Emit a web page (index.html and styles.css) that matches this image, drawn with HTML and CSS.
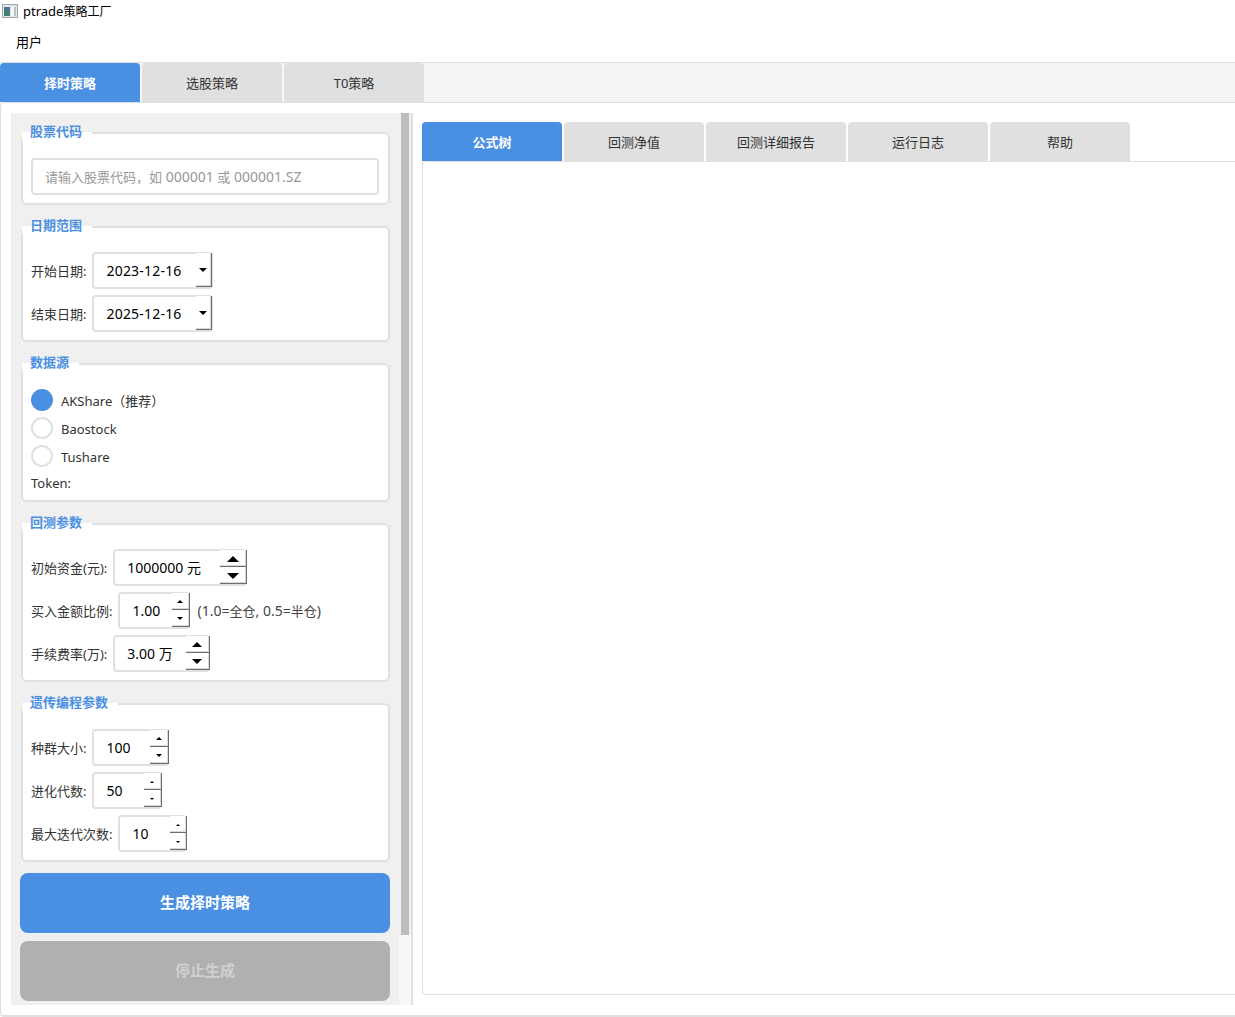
FILE: index.html
```html
<!DOCTYPE html>
<html lang="zh-CN">
<head>
<meta charset="utf-8">
<title>ptrade策略工厂</title>
<link rel="stylesheet" href="styles.css">
</head>
<body>
<div class="window">
  <header class="titlebar">
    <svg class="app-icon" width="16" height="14" viewBox="0 0 16 14">
      <rect x="0.5" y="0.5" width="15" height="13" fill="#e4e8ea" stroke="#a0a8ac"/>
      <rect x="2" y="3" width="6" height="9" fill="#3f7f78"/>
      <rect x="2" y="3" width="6" height="3" fill="#4c6f9c"/>
      <rect x="9" y="3" width="5" height="9" fill="#f4f6f6"/>
      <rect x="12" y="3" width="2" height="9" fill="#b9c2c6"/>
    </svg>
    <span class="app-title">ptrade<span class="cjk-sm">策略工厂</span></span>
  </header>
  <nav class="menubar"><span class="menu-item">用户</span></nav>
  <div class="tabbar main-tabs">
    <div class="tab active">择时策略</div>
    <div class="tab">选股策略</div>
    <div class="tab">T0策略</div>
  </div>
  <main class="main-pane">
    <aside class="scroll-area">
      <div class="form-panel">
        <section class="group">
          <h3 class="group-title">股票代码</h3>
          <div class="text-input"><span class="cjk">请输入股票代码，如</span> 000001 <span class="cjk">或</span> 000001.SZ</div>
        </section>
        <section class="group">
          <h3 class="group-title">日期范围</h3>
          <div class="row"><label class="lbl">开始日期:</label>
            <div class="field date"><span class="value">2023-12-16</span><span class="drop"><i class="tri down s-md"></i></span></div></div>
          <div class="row"><label class="lbl">结束日期:</label>
            <div class="field date"><span class="value">2025-12-16</span><span class="drop"><i class="tri down s-md"></i></span></div></div>
        </section>
        <section class="group">
          <h3 class="group-title">数据源</h3>
          <div class="radio-row"><span class="radio on"></span><span class="lbl">AKShare（推荐）</span></div>
          <div class="radio-row"><span class="radio"></span><span class="lbl">Baostock</span></div>
          <div class="radio-row"><span class="radio"></span><span class="lbl">Tushare</span></div>
          <div class="token-row lbl">Token:</div>
        </section>
        <section class="group">
          <h3 class="group-title">回测参数</h3>
          <div class="row"><label class="lbl">初始资金(元):</label>
            <div class="field w-capital"><span class="value">1000000 元</span><span class="spin b-27"><span class="btn"><i class="tri up s-xl"></i></span><span class="btn"><i class="tri down s-xl"></i></span></span></div></div>
          <div class="row"><label class="lbl">买入金额比例:</label>
            <div class="field w-ratio"><span class="value">1.00</span><span class="spin b-18"><span class="btn"><i class="tri up s-sm"></i></span><span class="btn"><i class="tri down s-sm"></i></span></span></div>
            <span class="hint">(1.0=<span class="cjk">全仓</span>, 0.5=<span class="cjk">半仓</span>)</span></div>
          <div class="row"><label class="lbl">手续费率(万):</label>
            <div class="field w-fee"><span class="value">3.00 万</span><span class="spin b-24"><span class="btn"><i class="tri up s-lg"></i></span><span class="btn"><i class="tri down s-lg"></i></span></span></div></div>
        </section>
        <section class="group">
          <h3 class="group-title">遗传编程参数</h3>
          <div class="row"><label class="lbl">种群大小:</label>
            <div class="field w-pop"><span class="value">100</span><span class="spin b-19"><span class="btn"><i class="tri up s-sm"></i></span><span class="btn"><i class="tri down s-sm"></i></span></span></div></div>
          <div class="row"><label class="lbl">进化代数:</label>
            <div class="field w-gen"><span class="value">50</span><span class="spin b-18"><span class="btn"><i class="tri up s-xs"></i></span><span class="btn"><i class="tri down s-xs"></i></span></span></div></div>
          <div class="row"><label class="lbl">最大迭代次数:</label>
            <div class="field w-iter"><span class="value">10</span><span class="spin b-17"><span class="btn"><i class="tri up s-xs"></i></span><span class="btn"><i class="tri down s-xs"></i></span></span></div></div>
        </section>
        <button class="action primary" type="button">生成择时策略</button>
        <button class="action disabled" type="button">停止生成</button>
      </div>
      <div class="scrollbar"><div class="thumb"></div><div class="track"></div></div>
    </aside>
    <div class="splitter"></div>
    <section class="results">
      <div class="tabbar result-tabs">
        <div class="tab active">公式树</div>
        <div class="tab">回测净值</div>
        <div class="tab">回测详细报告</div>
        <div class="tab">运行日志</div>
        <div class="tab">帮助</div>
      </div>
      <div class="result-pane"></div>
    </section>
  </main>
</div>
</body>
</html>
```
FILE: styles.css
```css
* { box-sizing: border-box; }
html, body { margin: 0; padding: 0; background: #fff; }
body {
  font-family: "Noto Sans", "Noto Sans CJK SC", sans-serif;
  font-size: 13px;
  color: #333;
}
.window {
  width: 1235px;
  height: 1017px;
  overflow: hidden;
  display: flex;
  flex-direction: column;
}
.titlebar {
  height: 30px;
  flex: none;
  display: flex;
  align-items: flex-start;
  padding: 4px 0 0 2px;
  color: #000;
}
.app-icon { flex: none; }
.app-title { margin-left: 5px; line-height: 14px; font-size: 13px; }
.cjk-sm { font-size: 12px; }
.cjk { font-size: 13px; }
.menubar {
  height: 32px;
  flex: none;
  display: flex;
  align-items: center;
  padding: 0 0 8px 16px;
  line-height: 18px;
  color: #000;
}
.tabbar { display: flex; gap: 2px; flex: none; }
.tab {
  width: 140px;
  height: 39px;
  padding-bottom: 1px;
  background: #e0e0e0;
  border-radius: 4px 4px 0 0;
  display: flex;
  align-items: center;
  justify-content: center;
  color: #333;
}
.tab.active { background: #4a90e2; color: #fff; font-weight: 700; }
.main-tabs {
  height: 40px;
  background: #f5f5f5;
  border-top: 1px solid #e0e0e0;
}
.main-pane {
  flex: 1;
  min-height: 0;
  display: flex;
  border: 2px solid #e0e0e0;
  border-top-width: 1px;
  border-right: none;
  border-left-width: 1px;
  border-radius: 4px 0 0 4px;
  padding: 10px 0 10px 10px;
}
.scroll-area { width: 400px; flex: none; display: flex; background: #f0f0f0; }
.form-panel {
  width: 388px;
  flex: none;
  padding: 19px 9px 0;
  display: flex;
  flex-direction: column;
}
.group {
  position: relative;
  margin: 0 0 21px 1px;
  padding: 24px 8px 8px 8px;
  background: #fff;
  border: 2px solid #e0e0e0;
  border-radius: 6px;
  display: flex;
  flex-direction: column;
  gap: 6px;
}
.group:nth-of-type(5) { margin-bottom: 11px; }
.group-title {
  position: absolute;
  left: -1px;
  top: -11px;
  margin: 0;
  padding: 0 10px 0 8px;
  height: 17px;
  line-height: 16px;
  font-size: 13px;
  font-weight: 700;
  color: #4a90e2;
  background: linear-gradient(#f0f0f0 0 9px, #fff 9px);
}
.text-input {
  width: 348px;
  height: 37px;
  padding: 0 12px;
  display: block;
  line-height: 33px;
  border: 2px solid #e0e0e0;
  border-radius: 4px;
  font-size: 14px;
  color: #999;
  background: #fff;
  white-space: nowrap;
}
.row { display: flex; align-items: center; height: 37px; }
.lbl { color: #333; line-height: 18px; white-space: nowrap; }
.field {
  margin-left: 6px;
  height: 37px;
  flex: none;
  display: flex;
  align-items: stretch;
  justify-content: space-between;
  border: 2px solid #e0e0e0;
  border-radius: 4px;
  background: #fff;
}
.value {
  padding-left: 12px;
  align-self: center;
  font-size: 14px;
  line-height: 20px;
  color: #000;
  white-space: nowrap;
}
.date { width: 121px; }
.date .value { letter-spacing: 0.2px; }
.w-capital { width: 134px; }
.w-ratio { width: 72px; }
.w-fee { width: 97px; }
.w-pop { width: 77px; }
.w-gen { width: 70px; }
.w-iter { width: 69px; }
.drop {
  width: 16px;
  margin: -1px -1px 0 0;
  display: flex;
  align-items: center;
  justify-content: center;
  background: #fff;
  box-shadow: inset -1px -1px #6e6e6e, inset -2px -2px #d8d8d8;
  padding-right: 2px;
}
.spin { display: flex; flex-direction: column; margin: -1px -2px 0 0; flex: none; }
.b-27 { width: 27px; }
.b-24 { width: 24px; }
.b-19 { width: 19px; }
.b-18 { width: 18px; }
.b-17 { width: 17px; }
.btn {
  flex: 1;
  display: flex;
  align-items: center;
  justify-content: center;
  background: #fff;
  box-shadow: inset -1px -1px #6e6e6e, inset -2px -2px #d8d8d8;
  padding-right: 2px;
}
.tri { display: block; width: 0; height: 0; border-style: solid; border-color: transparent; }
.tri.up { border-top-width: 0; border-bottom-color: #000; }
.tri.down { border-bottom-width: 0; border-top-color: #000; }
.s-xl { border-left-width: 6px; border-right-width: 6px; }
.s-xl.up { border-bottom-width: 6px; }
.s-xl.down { border-top-width: 6px; }
.s-lg { border-left-width: 5px; border-right-width: 5px; }
.s-lg.up { border-bottom-width: 5px; }
.s-lg.down { border-top-width: 5px; }
.s-md { border-left-width: 4px; border-right-width: 4px; }
.s-md.up { border-bottom-width: 4px; }
.s-md.down { border-top-width: 4px; }
.s-sm { border-left-width: 3px; border-right-width: 3px; }
.s-sm.up { border-bottom-width: 3px; }
.s-sm.down { border-top-width: 3px; }
.s-xs { border-left-width: 2px; border-right-width: 2px; }
.s-xs.up { border-bottom-width: 2px; }
.s-xs.down { border-top-width: 2px; }
.hint { margin-left: 7px; font-size: 14px; color: #444; white-space: nowrap; }
.radio-row { height: 22px; display: flex; align-items: center; gap: 8px; }
.radio-row .lbl { padding-top: 2px; }
.radio {
  width: 22px;
  height: 22px;
  flex: none;
  border: 2px solid #e0e0e0;
  border-radius: 50%;
  background: #fff;
}
.radio.on { background: #4a90e2; border-color: #4a90e2; }
.token-row { height: 20px; line-height: 20px; margin-bottom: -1px; }
.action {
  width: 370px;
  height: 60px;
  flex: none;
  border: none;
  border-radius: 8px;
  padding: 0 0 4px;
  font: inherit;
  font-size: 15px;
  font-weight: 700;
  color: #fff;
}
.primary { background: #4a90e2; margin-bottom: 8px; }
.disabled { background: #b0b0b0; color: #d0d0d0; }
.scrollbar { width: 12px; flex: none; display: flex; flex-direction: column; }
.thumb { height: 822px; margin: 0 2px; background: #bdbdbd; }
.track {
  flex: 1;
  background-color: #fff;
  background-image: conic-gradient(#f0f0f0 25%, #fff 0 50%, #f0f0f0 0 75%, #fff 0);
  background-size: 2px 2px;
}
.splitter { width: 2px; flex: none; background: #e0e0e0; }
.results {
  flex: 1;
  min-width: 0;
  padding: 9px 0 10px 9px;
  display: flex;
  flex-direction: column;
}
.result-tabs { height: 39px; }
.result-pane {
  flex: 1;
  background: #fff;
  border: 1px solid #e0e0e0;
  border-right: none;
  border-radius: 4px 0 0 4px;
}
```
